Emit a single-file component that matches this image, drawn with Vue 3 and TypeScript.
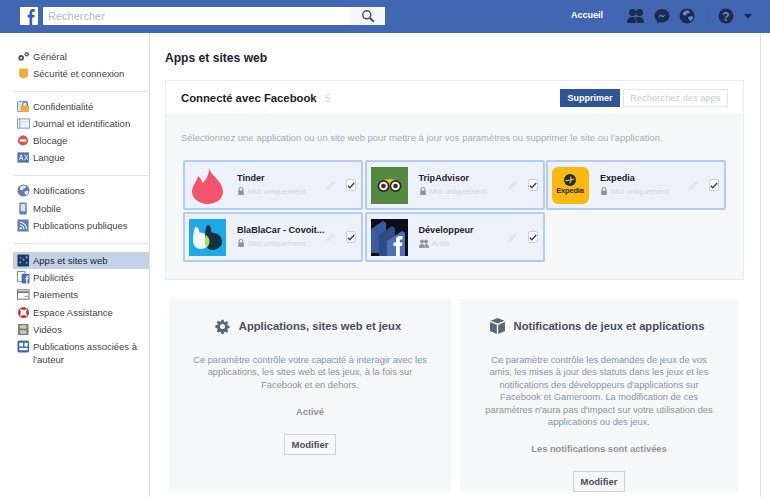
<template>
  <div class="page">
    <header class="topbar">
      <div class="fb-logo">
        <svg width="18" height="18" viewBox="0 0 18 18"><path d="M9.500 18V10.600H7.600V7.700h1.900V5.700c0-2.400 1.400-3.600 3.400-3.600.9 0 1.700.1 1.900.1v2.600h-1.300c-1.100 0-1.300.5-1.300 1.300v1.600h2.500l-.3 2.900h-2.200V18z" fill="#3f5f9f"/></svg>
      </div>
      <div class="search">
        <span class="search-text">Rechercher</span>
        <span class="search-btn">
          <svg width="14" height="14" viewBox="0 0 14 14" fill="none" stroke="#4b4f56" stroke-width="1.500"><circle cx="5.800" cy="5.800" r="4"/><path d="M8.800 8.800l4 4" stroke-width="2"/></svg>
        </span>
      </div>
      <span class="home">Accueil</span>
      <div class="top-icons">
        <svg width="18" height="16" viewBox="0 0 18 16" fill="#1c2b50"><circle cx="5.500" cy="4.500" r="3.500"/><circle cx="12.500" cy="4.500" r="3.500"/><path d="M0 15c0-4 2-6 5.500-6S9 11 9 15zM10 15c0-2-.4-4-1.400-5.400.9-.5 2-.6 3.400-.6 3.500 0 5 2 5 6z"/></svg>
        <svg class="msg" width="16" height="16" viewBox="0 0 16 16"><path d="M8 1C3.800 1 .5 4 .5 7.800c0 2.100 1 4 2.700 5.200V15.500l2.400-1.300c.8.200 1.600.3 2.400.3 4.200 0 7.500-3 7.500-6.700S12.200 1 8 1z" fill="#1c2b50"/><path d="M3.800 9.800l3-3.200 1.700 1.500 3.400-1.900-3 3.300-1.700-1.500z" fill="#6f8cc4"/></svg>
        <svg class="globe" width="16" height="16" viewBox="0 0 16 16"><circle cx="8" cy="8" r="7.500" fill="#1c2b50"/><path d="M4 5c1-2 4-3 6-2l1 2-3 .5-1 2-3-.5zM9 9l4-1 1 2-2 3-2-1z" fill="#6f8cc4"/></svg>
        <span class="divider"></span>
        <svg class="help" width="16" height="16" viewBox="0 0 16 16"><circle cx="8" cy="8" r="7.500" fill="#1c2b50"/><text x="8" y="12.500" text-anchor="middle" class="help-q">?</text></svg>
        <span class="caret"></span>
      </div>
    </header>

    <div class="layout">
      <aside class="sidebar">
        <ul v-for="(group, i) in menu" :key="i" class="menu-group">
          <li v-for="item in group" :key="item.label" class="menu-item" :class="{ active: item.active }">
            <svg class="menu-icon" width="13" height="13" viewBox="0 0 14 14" v-html="item.icon"></svg>
            <span>{{ item.label }}</span>
          </li>
        </ul>
      </aside>

      <main class="content">
        <h1 class="page-title">Apps et sites web</h1>

        <section class="card">
          <div class="card-head">
            <span class="card-title">Connecté avec Facebook</span>
            <span class="count">5</span>
            <button class="btn-remove">Supprimer</button>
            <span class="app-search">Recherchez des apps</span>
          </div>
          <div class="card-body">
            <p class="hint">Sélectionnez une application ou un site web pour mettre à jour vos paramètres ou supprimer le site ou l'application.</p>
            <div class="tiles">
              <div v-for="app in apps" :key="app.name" class="tile">
                <svg class="app-logo" width="37" height="37" viewBox="0 0 37 37" v-html="app.logo"></svg>
                <div class="tile-text">
                  <div class="app-name">{{ app.name }}</div>
                  <div class="app-scope">
                    <svg v-if="app.scope === 'Amis'" width="10" height="9" viewBox="0 0 10 9" fill="#90949c"><circle cx="3" cy="2.500" r="2"/><circle cx="7" cy="2.500" r="2"/><path d="M0 9c0-2.500 1-4 3-4s3 1.500 3 4zM6.500 9c0-1.500-.2-2.800-.8-3.800C6.100 5 6.500 5 7 5c2 0 3 1.500 3 4z"/></svg>
                    <svg v-else width="8" height="10" viewBox="0 0 10 10" fill="#90949c"><path d="M2 4.500V3a3 3 0 0 1 6 0v1.500h.5V10h-7V4.500zM3.300 4.500h3.400V3a1.700 1.700 0 0 0-3.400 0z"/></svg>
                    <span>{{ app.scope }}</span>
                  </div>
                </div>
                <svg class="pencil" width="9" height="9" viewBox="0 0 10 10"><path d="M0 10l1-3.500L7.500 0 10 2.500 3.500 9z" fill="#e3e5ea"/></svg>
                <span class="check">
                  <svg width="8" height="7" viewBox="0 0 8 7" fill="none" stroke="#3b3f46" stroke-width="1.400"><path d="M.8 3.800l2 2L7.200 1"/></svg>
                </span>
              </div>
            </div>
          </div>
        </section>

        <div class="panels">
          <section class="panel panel-left">
            <h2 class="panel-title">
              <svg width="15" height="15" viewBox="-1 -1 18 18"><path fill-rule="evenodd" fill="#606770" d="M6.600 0h2.800l.4 2.200 1.300.6 1.900-1.300 2 2-1.300 1.900.6 1.300 2.200.4v2.800l-2.200.4-.6 1.300 1.300 1.900-2 2-1.900-1.300-1.300.6-.4 2.200H6.600l-.4-2.200-1.300-.6-1.900 1.300-2-2 1.300-1.900-.6-1.300L-.5 9.400V6.600l2.200-.4.6-1.300L1 3l2-2 1.900 1.300 1.300-.6zM8 5a3 3 0 1 0 0 6 3 3 0 0 0 0-6z"/></svg>
              Applications, sites web et jeux
            </h2>
            <p class="panel-text">Ce paramètre contrôle votre capacité à interagir avec les applications, les sites web et les jeux, à la fois sur Facebook et en dehors.</p>
            <p class="panel-status">Activé</p>
            <button class="btn-edit">Modifier</button>
          </section>
          <section class="panel panel-right">
            <h2 class="panel-title">
              <svg width="15" height="16" viewBox="0 0 15 16" fill="#606770"><path d="M7.500 0l7 2.800-7 2.800-7-2.800zM0 4l6.800 2.800V16L0 13zM15 4L8.200 6.800V16L15 13z"/></svg>
              Notifications de jeux et applications
            </h2>
            <p class="panel-text">Ce paramètre contrôle les demandes de jeux de vos amis, les mises à jour des statuts dans les jeux et les notifications des développeurs d'applications sur Facebook et Gameroom. La modification de ces paramètres n'aura pas d'impact sur votre utilisation des applications ou des jeux.</p>
            <p class="panel-status">Les notifications sont activées</p>
            <button class="btn-edit">Modifier</button>
          </section>
        </div>
      </main>
    </div>
  </div>
</template>

<script setup lang="ts">
interface MenuItem {
  label: string
  icon: string
  active?: boolean
}

interface App {
  name: string
  scope: string
  logo: string
}

const menu: MenuItem[][] = [
  [
    { label: 'Général', icon: '<circle cx="4.500" cy="8.500" r="3" fill="#555" /><circle cx="4.500" cy="8.500" r="1" fill="#fff" /><circle cx="10.500" cy="4.500" r="2.400" fill="#666" /><circle cx="10.500" cy="4.500" r=".8" fill="#fff" />' },
    { label: 'Sécurité et connexion', icon: '<path d="M2 1.500h10l-.5 1 .5 6c0 2-2.500 3-5 4-2.500-1-5-2-5-4l.5-6z" fill="#e8ad3c" />' },
  ],
  [
    { label: 'Confidentialité', icon: '<rect x=".5" y="1.500" width="11" height="11" rx="1" fill="#dbe3f0" stroke="#6f8cc4" /><rect x="4" y="6" width="9" height="7" fill="#e8ad3c" /><path d="M6 6V4.500a2.500 2.500 0 0 1 5 0V6" fill="none" stroke="#666" />' },
    { label: 'Journal et identification', icon: '<rect x=".5" y="2" width="13" height="10" fill="#eef2f8" stroke="#7d95c2" /><path d="M3 2v10" stroke="#7d95c2" /><path d="M5 5h7" stroke="#c5d0e4" />' },
    { label: 'Blocage', icon: '<circle cx="6.500" cy="7" r="5.500" fill="#d9534a" /><rect x="3" y="5.800" width="7" height="2.400" fill="#fff" />' },
    { label: 'Langue', icon: '<rect x=".5" y="1.500" width="12.500" height="11" fill="#5371ab" /><path d="M2.500 10l2-6 2 6M3.300 8h2.500M8 4l4 6M12 4l-4 6" stroke="#fff" fill="none" stroke-width=".9" />' },
  ],
  [
    { label: 'Notifications', icon: '<circle cx="7" cy="7" r="6.500" fill="#5a7ab8" /><path d="M3 4c1-2 4-3 6-2l1 2-3 1-1 2-3-1zM8 8l4-1 .5 2-2 3-2-1z" fill="#e4eaf5" />' },
    { label: 'Mobile', icon: '<rect x="2.500" y=".5" width="8" height="13" rx="1" fill="#5f7db6" /><rect x="4" y="2" width="5" height="8" fill="#dbe3f0" />' },
    { label: 'Publications publiques', icon: '<rect x=".5" y=".5" width="12" height="13" fill="#5f7db6" /><circle cx="4" cy="10" r="1.300" fill="#fff" /><path d="M3 6.500c2.500 0 4.500 2 4.500 4.500M3 3.500c4.200 0 7.500 3.300 7.500 7.500" fill="none" stroke="#fff" stroke-width="1.200" />' },
  ],
  [
    { label: 'Apps et sites web', active: true, icon: '<rect x=".5" y=".5" width="12.500" height="13" rx="1" fill="#1f3a68" /><g fill="#8fb0e6"><circle cx="3.500" cy="9" r="1" /><circle cx="7" cy="6" r="1" /><circle cx="10.500" cy="3.500" r="1" /><circle cx="10.500" cy="9.500" r="1" /><circle cx="4" cy="4" r=".8" /></g>' },
    { label: 'Publicités', icon: '<rect x=".5" y=".5" width="8" height="11" fill="#fff" stroke="#5aa25a" /><rect x="5" y="3" width="8.500" height="10.500" rx="1" fill="#4a6eb5" /><path d="M10 13.500V9H9V7.500h1V6.500c0-1 .6-1.500 1.500-1.500h1v1.400h-.7c-.4 0-.5.200-.5.500v.6h1.200L12.300 9h-1v4.500z" fill="#fff" />' },
    { label: 'Paiements', icon: '<rect x=".5" y="2" width="12.500" height="10" fill="#fff" stroke="#666" /><rect x="1" y="3.500" width="11.500" height="2" fill="#777" /><path d="M8 9h4" stroke="#888" />' },
    { label: 'Espace Assistance', icon: '<circle cx="7" cy="7" r="4.500" fill="none" stroke="#c9362f" stroke-width="3" /><path d="M3.500 3.500l2 2M10.500 3.500l-2 2M3.500 10.500l2-2M10.500 10.500l-2-2" stroke="#f3e6e4" stroke-width="2" />' },
    { label: 'Vidéos', icon: '<rect x="1" y="1" width="11.500" height="12" fill="#8a8379" /><rect x="3.500" y="2.500" width="6.500" height="3.500" fill="#cfcac2" /><rect x="3.500" y="8" width="6.500" height="3.500" fill="#cfcac2" />' },
    { label: 'Publications associées à l\'auteur', icon: '<rect x=".5" y=".5" width="12.500" height="13" rx="2" fill="#3f67b5" /><rect x="2.500" y="3" width="4" height="4" fill="#fff" /><rect x="8" y="3" width="3.500" height="4" fill="#fff" /><rect x="2.500" y="8.500" width="9" height="2.500" fill="#fff" />' },
  ],
]

const apps: App[] = [
  {
    name: 'Tinder',
    scope: 'Moi uniquement',
    logo: '<path d="M20 1C21 8 34 14 34 25 34 32 27 37 18.500 37 10 37 3 31 3 25 3 18 8 15 9 9 12 11 13 14 13.500 16 17 13 20 8 20 1z" fill="#f2546d" />',
  },
  {
    name: 'TripAdvisor',
    scope: 'Moi uniquement',
    logo: '<rect width="37" height="37" fill="#55893f" /><path d="M11 13.500c5-2 10-2 15 0l-7.500 5z" fill="#e8c43a" /><circle cx="12.500" cy="19" r="6" fill="#2a2a2a" /><circle cx="24.500" cy="19" r="6" fill="#2a2a2a" /><circle cx="12.500" cy="19" r="4.300" fill="#f3f0e6" /><circle cx="24.500" cy="19" r="4.300" fill="#f3f0e6" /><circle cx="12.500" cy="19" r="2.300" fill="#33302c" /><circle cx="24.500" cy="19" r="2.300" fill="#33302c" />',
  },
  {
    name: 'Expedia',
    scope: 'Moi uniquement',
    logo: '<rect width="37" height="37" rx="6" fill="#fbb80e" /><circle cx="18" cy="13" r="6" fill="#1a2b52" /><path d="M13.500 13.800l9-1.800M18.500 9.500l1 3.500-2 3.200" stroke="#fbb80e" stroke-width="1.200" fill="none" /><text x="18" y="26" text-anchor="middle" style="font: bold 7.500px \'Liberation Sans\', sans-serif; letter-spacing: -0.2px" fill="#1a2b52">Expedia</text>',
  },
  {
    name: 'BlaBlaCar - Covoit...',
    scope: 'Moi uniquement',
    logo: '<rect width="37" height="37" fill="#1ea9e8" /><path d="M7 8c2.500 0 3 3 3.500 5.500 5 0 10 3.500 10 8.500S16.500 30 12 30s-8-3-8-9c0-5 1-13 3-13z" fill="#f3f8fb" /><path d="M19 6c2.500 0 3 3 3.500 7.500 5.500 0 10.500 3.500 10.500 9S28 31 23.500 31 16 27 16 21c0-6 .5-15 3-15z" fill="#12323f" /><path d="M17 16c2 1.500 3.500 3.500 3.500 6.500 0 2.500-1 4.500-3 6-1-2-1.500-4-1.500-7.500 0-2 0-3.500 1-5z" fill="#aee05a" />',
  },
  {
    name: 'Développeur',
    scope: 'Amis',
    logo: '<rect width="37" height="37" fill="#0b0f1c" /><path d="M0 10l12-8 3 2v30l-15 0z" fill="#3a5a9a" /><path d="M8 16l13-9 3 2v28H8z" fill="#2e4b86" /><path d="M16 22l15-10 3 2v23H16z" fill="#4c70b5" /><path d="M25 37V27h-2.500v-3.500H25V21c0-2.500 1.500-4 4-4h2.500v3.500H30c-1 0-1.200.5-1.200 1.200v1.800h2.700l-.4 3.500h-2.300v10z" fill="#fff" />',
  },
]
</script>

<style scoped>
.page {
  height: 100vh;
  overflow: hidden;
  background: #fff;
  font-family: "Liberation Sans", Arial, sans-serif;
  color: #1d2129;
}

.topbar {
  height: 33px;
  box-sizing: border-box;
  padding: 7px 0 0 20px;
  display: flex;
  align-items: flex-start;
  background: #4267b2;
}

.fb-logo {
  width: 18px;
  height: 18px;
  background: #fff;
  border-radius: 1px;
}

.search {
  margin-left: 5px;
  width: 342px;
  height: 18px;
  display: flex;
  justify-content: space-between;
  align-items: center;
  background: #fff;
  border-radius: 1px;
}

.search-text {
  padding-left: 5px;
  font-size: 11px;
  color: #b4b7bd;
}

.search-btn {
  width: 35px;
  height: 18px;
  display: flex;
  align-items: center;
  justify-content: center;
  background: #f6f7f9;
}

.home {
  width: 32px;
  margin-left: 186px;
  margin-top: 3px;
  font-size: 9px;
  font-weight: bold;
  white-space: nowrap;
  color: #fff;
}

.top-icons {
  margin-left: 24px;
  margin-top: 1px;
  display: flex;
  align-items: center;
}

.msg {
  margin-left: 9px;
}

.globe {
  margin-left: 9px;
}

.divider {
  width: 1px;
  height: 14px;
  margin-left: 12px;
  background: #3c5da0;
}

.help {
  margin-left: 10px;
}

.help-q {
  font: bold 12px "Liberation Sans", sans-serif;
  fill: #6f8cc4;
}

.caret {
  margin-left: 10px;
  border: 4.500px solid transparent;
  border-top: 5px solid #1c2b50;
  border-bottom: 0;
}

.layout {
  display: flex;
  width: 761px;
  height: 464px;
  border-right: 1px solid #dddfe2;
  box-sizing: border-box;
}

.sidebar {
  width: 150px;
  flex: none;
  box-sizing: border-box;
  padding: 14.500px 0 0 13px;
  border-right: 1px solid #dddfe2;
}

.menu-group {
  list-style: none;
  margin: 0 0 6px;
  padding: 0 0 8.500px;
  border-bottom: 1px solid #e3e5e8;
}

.menu-group:last-child {
  padding-top: 2px;
  border-bottom: none;
}

.menu-item {
  display: flex;
  align-items: flex-start;
  gap: 3px;
  padding: 2px 0 2px 4px;
  min-height: 13.300px;
  font-size: 9.500px;
  line-height: 13.300px;
  color: #3e4249;
}

.menu-item.active {
  background: #c4d2e7;
  color: #1d2129;
}

.menu-icon {
  flex: none;
}

.content {
  flex: 1;
  min-width: 0;
  padding: 18px 0 0 15px;
}

.page-title {
  margin: 0 0 14px;
  font-size: 12.100px;
  line-height: 15px;
  font-weight: bold;
  color: #1a2233;
}

.card {
  width: 579px;
  box-sizing: border-box;
  border: 1px solid #e9ebee;
}

.card-head {
  height: 35px;
  box-sizing: border-box;
  padding: 0 15px;
  display: flex;
  align-items: center;
  border-bottom: 1px solid #e9ebee;
}

.card-title {
  font-size: 11.300px;
  font-weight: bold;
  color: #1d2129;
}

.count {
  margin-left: 8px;
  font-size: 10px;
  color: #d5d7db;
}

.btn-remove {
  margin-left: auto;
  height: 18px;
  width: 60px;
  padding: 0;
  border: 0;
  background: #2f5597;
  color: #fff;
  font: bold 9px "Liberation Sans", Arial, sans-serif;
}

.app-search {
  margin-left: 3px;
  width: 105px;
  height: 18px;
  box-sizing: border-box;
  padding-left: 6px;
  border: 1px solid #e3e5e8;
  background: #fff;
  font-size: 9.400px;
  line-height: 16px;
  white-space: nowrap;
  color: #c9cbd0;
}

.card-body {
  height: 163px;
  box-sizing: border-box;
  padding: 16px 15px 0 17px;
  background: #f6f7f9;
}

.hint {
  margin: 0 0 16px -2px;
  font-size: 9.460px;
  line-height: 12px;
  color: #a9acb2;
  white-space: nowrap;
}

.tiles {
  display: grid;
  grid-template-columns: repeat(3, 180px);
  grid-auto-rows: 50px;
  gap: 2px 1.500px;
}

.tile {
  box-sizing: border-box;
  padding: 0 5px 0 4px;
  display: flex;
  align-items: center;
  background: #edf1f9;
  border: 2px solid #b3ccf6;
  border-radius: 2px;
}

.app-logo {
  flex: none;
}

.tile-text {
  margin-left: 11px;
  padding-bottom: 2px;
  width: 89px;
  flex: none;
}

.app-name {
  font-size: 9.100px;
  line-height: 13px;
  font-weight: bold;
  color: #1d2129;
  white-space: nowrap;
}

.app-scope {
  margin-top: 1px;
  display: flex;
  align-items: center;
  gap: 3px;
  font-size: 8.100px;
  line-height: 11px;
  color: #d3d5da;
  white-space: nowrap;
}

.pencil {
  flex: none;
}

.check {
  margin-left: 11px;
  width: 10px;
  height: 10px;
  display: flex;
  align-items: center;
  justify-content: center;
  background: #fff;
  border: 1px solid #ccd0d6;
  border-radius: 2px;
}

.panels {
  margin: 19px 0 0 4px;
  display: flex;
  gap: 9px;
}

.panel {
  height: 193px;
  box-sizing: border-box;
  padding: 19px 22px 0;
  background: #f6f7f9;
  text-align: center;
}

.panel-left {
  width: 282px;
}

.panel-right {
  width: 278px;
  padding-left: 21px;
  padding-right: 21px;
}

.panel-title {
  margin: 0 -10px 20px -14px;
  display: flex;
  align-items: center;
  justify-content: center;
  gap: 9px;
  font-size: 11.200px;
  line-height: 16px;
  font-weight: bold;
  color: #4b4f56;
}

.panel-text {
  margin: 0 0 15px;
  font-size: 9.300px;
  line-height: 12.400px;
  color: #8d949e;
}

.panel-status {
  margin: 0 0 15px;
  font-size: 9.300px;
  line-height: 13px;
  font-weight: bold;
  color: #8d949e;
}

.btn-edit {
  display: block;
  margin: 0 auto;
  width: 52px;
  height: 21px;
  padding: 0;
  background: #f6f7f9;
  border: 1px solid #ced0d4;
  color: #4b4f56;
  font: bold 9.500px "Liberation Sans", Arial, sans-serif;
}
</style>
